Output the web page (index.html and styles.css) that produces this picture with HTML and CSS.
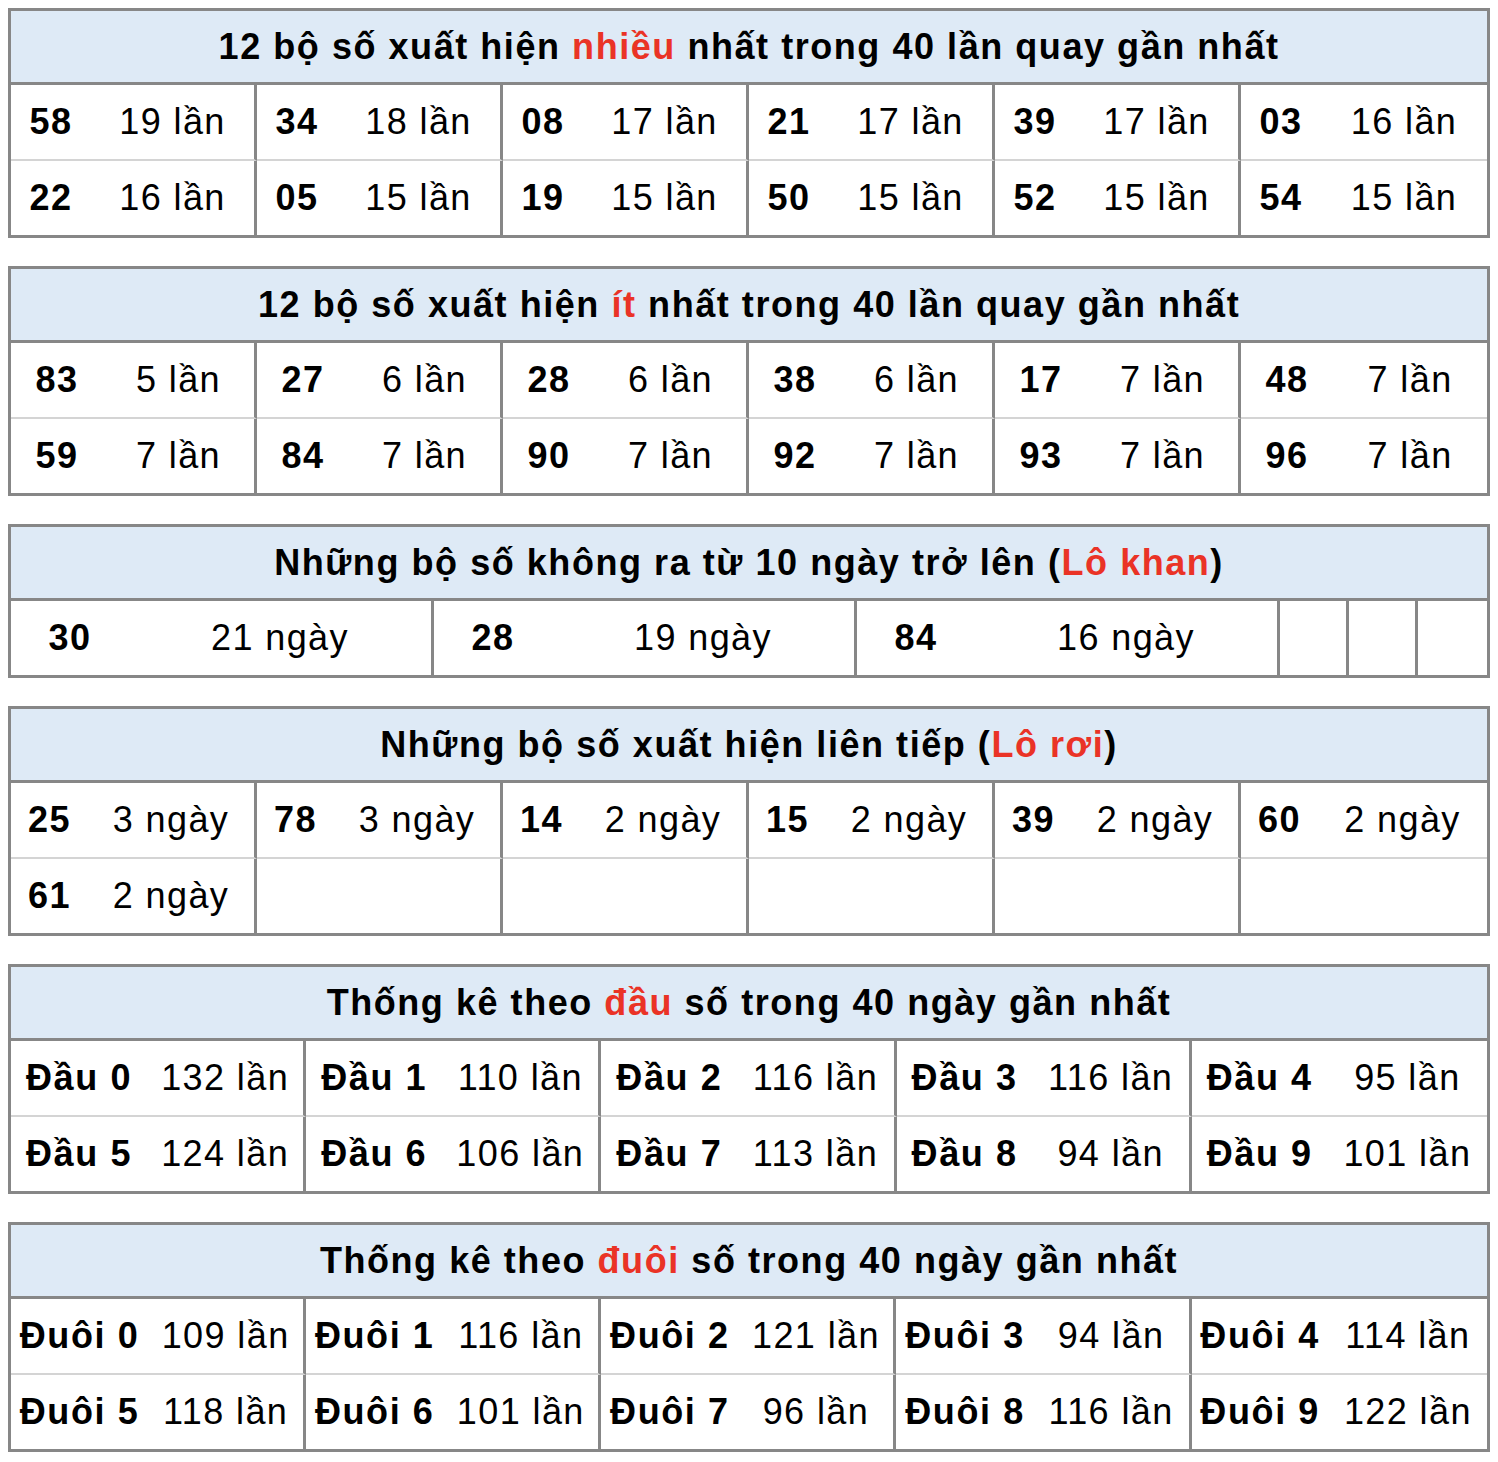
FILE: index.html
```html
<!DOCTYPE html>
<html lang="vi">
<head>
<meta charset="utf-8">
<title>Thống kê lô tô</title>
<link rel="stylesheet" href="styles.css">
</head>
<body>

<table class="stat">
  <colgroup>
    <col class="t1n"><col class="t1c"><col class="t1n"><col class="t1c"><col class="t1n"><col class="t1c">
    <col class="t1n"><col class="t1c"><col class="t1n"><col class="t1c"><col class="t1n"><col class="t1c">
  </colgroup>
  <tr><th class="head" colspan="12">12 bộ số xuất hiện <span class="hl">nhiều</span> nhất trong 40 lần quay gần nhất</th></tr>
  <tr class="first">
    <td class="num">58</td><td class="cnt">19 lần</td>
    <td class="num">34</td><td class="cnt">18 lần</td>
    <td class="num">08</td><td class="cnt">17 lần</td>
    <td class="num">21</td><td class="cnt">17 lần</td>
    <td class="num">39</td><td class="cnt">17 lần</td>
    <td class="num">03</td><td class="cnt last">16 lần</td>
  </tr>
  <tr>
    <td class="num">22</td><td class="cnt">16 lần</td>
    <td class="num">05</td><td class="cnt">15 lần</td>
    <td class="num">19</td><td class="cnt">15 lần</td>
    <td class="num">50</td><td class="cnt">15 lần</td>
    <td class="num">52</td><td class="cnt">15 lần</td>
    <td class="num">54</td><td class="cnt last">15 lần</td>
  </tr>
</table>

<table class="stat">
  <colgroup>
    <col class="t2n"><col class="t2c"><col class="t2n"><col class="t2c"><col class="t2n"><col class="t2c">
    <col class="t2n"><col class="t2c"><col class="t2n"><col class="t2c"><col class="t2n"><col class="t2c">
  </colgroup>
  <tr><th class="head" colspan="12">12 bộ số xuất hiện <span class="hl">ít</span> nhất trong 40 lần quay gần nhất</th></tr>
  <tr class="first">
    <td class="num">83</td><td class="cnt">5 lần</td>
    <td class="num">27</td><td class="cnt">6 lần</td>
    <td class="num">28</td><td class="cnt">6 lần</td>
    <td class="num">38</td><td class="cnt">6 lần</td>
    <td class="num">17</td><td class="cnt">7 lần</td>
    <td class="num">48</td><td class="cnt last">7 lần</td>
  </tr>
  <tr>
    <td class="num">59</td><td class="cnt">7 lần</td>
    <td class="num">84</td><td class="cnt">7 lần</td>
    <td class="num">90</td><td class="cnt">7 lần</td>
    <td class="num">92</td><td class="cnt">7 lần</td>
    <td class="num">93</td><td class="cnt">7 lần</td>
    <td class="num">96</td><td class="cnt last">7 lần</td>
  </tr>
</table>

<table class="stat">
  <colgroup>
    <col class="t3n"><col class="t3c"><col class="t3n"><col class="t3c"><col class="t3n"><col class="t3c">
    <col class="t3e"><col class="t3f"><col class="t3e"><col class="t3f"><col class="t3e"><col class="t3f">
  </colgroup>
  <tr><th class="head" colspan="12">Những bộ số không ra từ 10 ngày trở lên (<span class="hl">Lô khan</span>)</th></tr>
  <tr>
    <td class="num">30</td><td class="cnt">21 ngày</td>
    <td class="num">28</td><td class="cnt">19 ngày</td>
    <td class="num">84</td><td class="cnt">16 ngày</td>
    <td class="num"></td><td class="cnt"></td>
    <td class="num"></td><td class="cnt"></td>
    <td class="num"></td><td class="cnt last"></td>
  </tr>
</table>

<table class="stat">
  <colgroup>
    <col class="t4n"><col class="t4c"><col class="t4n"><col class="t4c"><col class="t4n"><col class="t4c">
    <col class="t4n"><col class="t4c"><col class="t4n"><col class="t4c"><col class="t4n"><col class="t4c">
  </colgroup>
  <tr><th class="head" colspan="12">Những bộ số xuất hiện liên tiếp (<span class="hl">Lô rơi</span>)</th></tr>
  <tr class="first">
    <td class="num">25</td><td class="cnt">3 ngày</td>
    <td class="num">78</td><td class="cnt">3 ngày</td>
    <td class="num">14</td><td class="cnt">2 ngày</td>
    <td class="num">15</td><td class="cnt">2 ngày</td>
    <td class="num">39</td><td class="cnt">2 ngày</td>
    <td class="num">60</td><td class="cnt last">2 ngày</td>
  </tr>
  <tr>
    <td class="num">61</td><td class="cnt">2 ngày</td>
    <td class="num"></td><td class="cnt"></td>
    <td class="num"></td><td class="cnt"></td>
    <td class="num"></td><td class="cnt"></td>
    <td class="num"></td><td class="cnt"></td>
    <td class="num"></td><td class="cnt last"></td>
  </tr>
</table>

<table class="stat">
  <colgroup>
    <col class="t5n"><col class="t5c"><col class="t5n"><col class="t5c"><col class="t5n"><col class="t5c">
    <col class="t5n"><col class="t5c"><col class="t5n"><col class="t5c">
  </colgroup>
  <tr><th class="head" colspan="10">Thống kê theo <span class="hl">đầu</span> số trong 40 ngày gần nhất</th></tr>
  <tr class="first">
    <td class="num">Đầu 0</td><td class="cnt">132 lần</td>
    <td class="num">Đầu 1</td><td class="cnt">110 lần</td>
    <td class="num">Đầu 2</td><td class="cnt">116 lần</td>
    <td class="num">Đầu 3</td><td class="cnt">116 lần</td>
    <td class="num">Đầu 4</td><td class="cnt last">95 lần</td>
  </tr>
  <tr>
    <td class="num">Đầu 5</td><td class="cnt">124 lần</td>
    <td class="num">Đầu 6</td><td class="cnt">106 lần</td>
    <td class="num">Đầu 7</td><td class="cnt">113 lần</td>
    <td class="num">Đầu 8</td><td class="cnt">94 lần</td>
    <td class="num">Đầu 9</td><td class="cnt last">101 lần</td>
  </tr>
</table>

<table class="stat">
  <colgroup>
    <col class="t6n"><col class="t6c"><col class="t6n"><col class="t6c"><col class="t6n"><col class="t6c">
    <col class="t6n"><col class="t6c"><col class="t6n"><col class="t6c">
  </colgroup>
  <tr><th class="head" colspan="10">Thống kê theo <span class="hl">đuôi</span> số trong 40 ngày gần nhất</th></tr>
  <tr class="first">
    <td class="num">Đuôi 0</td><td class="cnt">109 lần</td>
    <td class="num">Đuôi 1</td><td class="cnt">116 lần</td>
    <td class="num">Đuôi 2</td><td class="cnt">121 lần</td>
    <td class="num">Đuôi 3</td><td class="cnt">94 lần</td>
    <td class="num">Đuôi 4</td><td class="cnt last">114 lần</td>
  </tr>
  <tr>
    <td class="num">Đuôi 5</td><td class="cnt">118 lần</td>
    <td class="num">Đuôi 6</td><td class="cnt">101 lần</td>
    <td class="num">Đuôi 7</td><td class="cnt">96 lần</td>
    <td class="num">Đuôi 8</td><td class="cnt">116 lần</td>
    <td class="num">Đuôi 9</td><td class="cnt last">122 lần</td>
  </tr>
</table>

</body>
</html>
```
FILE: styles.css
```css
body {
  margin: 8px;
  background: #ffffff;
  font-family: "Liberation Sans", Arial, Helvetica, sans-serif;
  color: #000000;
}

.stat {
  width: 100%;
  table-layout: fixed;
  border-collapse: separate;
  border-spacing: 0;
  border: 3px solid #878787;
  margin: 0 0 28px 0;
  font-size: 36px;
}

.stat:last-child {
  margin-bottom: 0;
}

.head {
  height: 71px;
  padding: 0;
  background: #deeaf6;
  border-bottom: 3px solid #878787;
  font-weight: bold;
  font-size: 36px;
  letter-spacing: 1.55px;
  text-align: center;
  vertical-align: middle;
}

.hl {
  color: #ea3326;
}

.stat td {
  height: 74px;
  padding: 0;
  text-align: center;
  vertical-align: middle;
  white-space: nowrap;
  letter-spacing: 1.4px;
}

.first td {
  border-bottom: 2px solid #d4d4d4;
}

.stat td.num {
  font-weight: bold;
  letter-spacing: 1.6px;
}

.cnt {
  border-right: 3px solid #878787;
}

.cnt.last {
  border-right: none;
}

.t1n { width: 80px; }
.t1c { width: 166px; }
.t2n { width: 92px; }
.t2c { width: 154px; }
.t3n { width: 118px; }
.t3c { width: 305px; }
.t3e { width: 35px; }
.t3f { width: 34px; }
.t4n { width: 77px; }
.t4c { width: 169px; }
.t5n { width: 136px; }
.t5c { width: 159px; }
.t6n { width: 137px; }
.t6c { width: 158px; }
```
